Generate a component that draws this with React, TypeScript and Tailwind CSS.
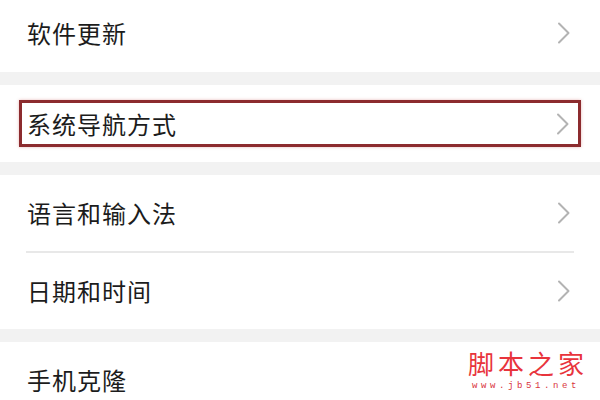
import React from "react"

const Chevron = () => (
  <svg width="14" height="22" viewBox="0 0 14 22" fill="none" className="shrink-0">
    <path d="M2 1.5 L11.5 11 L2 20.5" stroke="#b3b3b3" strokeWidth="2" strokeLinecap="round" strokeLinejoin="round" />
  </svg>
)

const Row = ({ label, className = "", arrow = true }: { label: string; className?: string; arrow?: boolean }) => (
  <div className={`flex items-center justify-between bg-white pl-[27px] pr-[29px] ${className}`}>
    <span className="text-[24px] leading-none tracking-[1px] text-[#1c1c1c]">{label}</span>
    {arrow && <Chevron />}
  </div>
)

const Gap = () => <div className="h-[13px] bg-[#f2f2f2]" />

export default function App() {
  return (
    <div
      className="relative h-[400px] w-[600px] overflow-hidden bg-[#f2f2f2]"
      style={{ fontFamily: '"Noto Sans CJK SC", "Noto Sans", sans-serif' }}
    >
      <Row label="软件更新" className="h-[72px] pb-[6px]" />
      <Gap />

      {/* highlighted row */}
      <div className="h-[77px] bg-white px-[19px] py-[15px]">
        <div className="flex h-full items-center justify-between border-[3px] border-[#8c2b2e] pl-[5px] pr-[8px] shadow-[0_0_3px_rgba(200,80,80,0.4)]">
          <span className="text-[24px] leading-none tracking-[1px] text-[#1c1c1c]">系统导航方式</span>
          <Chevron />
        </div>
      </div>
      <Gap />

      <div className="bg-white">
        <Row label="语言和输入法" className="h-[76px]" />
        <div className="mx-[26px] h-[2px] bg-[#e8e8e8]" />
        <Row label="日期和时间" className="h-[76px]" />
      </div>
      <Gap />

      <Row label="手机克隆" className="h-[80px] pb-[4px]" arrow={false} />

      {/* watermark */}
      <div className="absolute left-[468px] top-[349px] flex flex-col items-start">
        <span className="h-[28px] text-[26px] leading-[28px] tracking-[4px] text-[#e8343c]">
          脚本之家
        </span>
        <span
          className="mt-[5px] pl-[4px] text-[9px] leading-[9px] tracking-[3.6px] text-[#d9343c]"
          style={{ fontFamily: '"Liberation Mono", monospace' }}
        >
          www.jb51.net
        </span>
      </div>
    </div>
  )
}
